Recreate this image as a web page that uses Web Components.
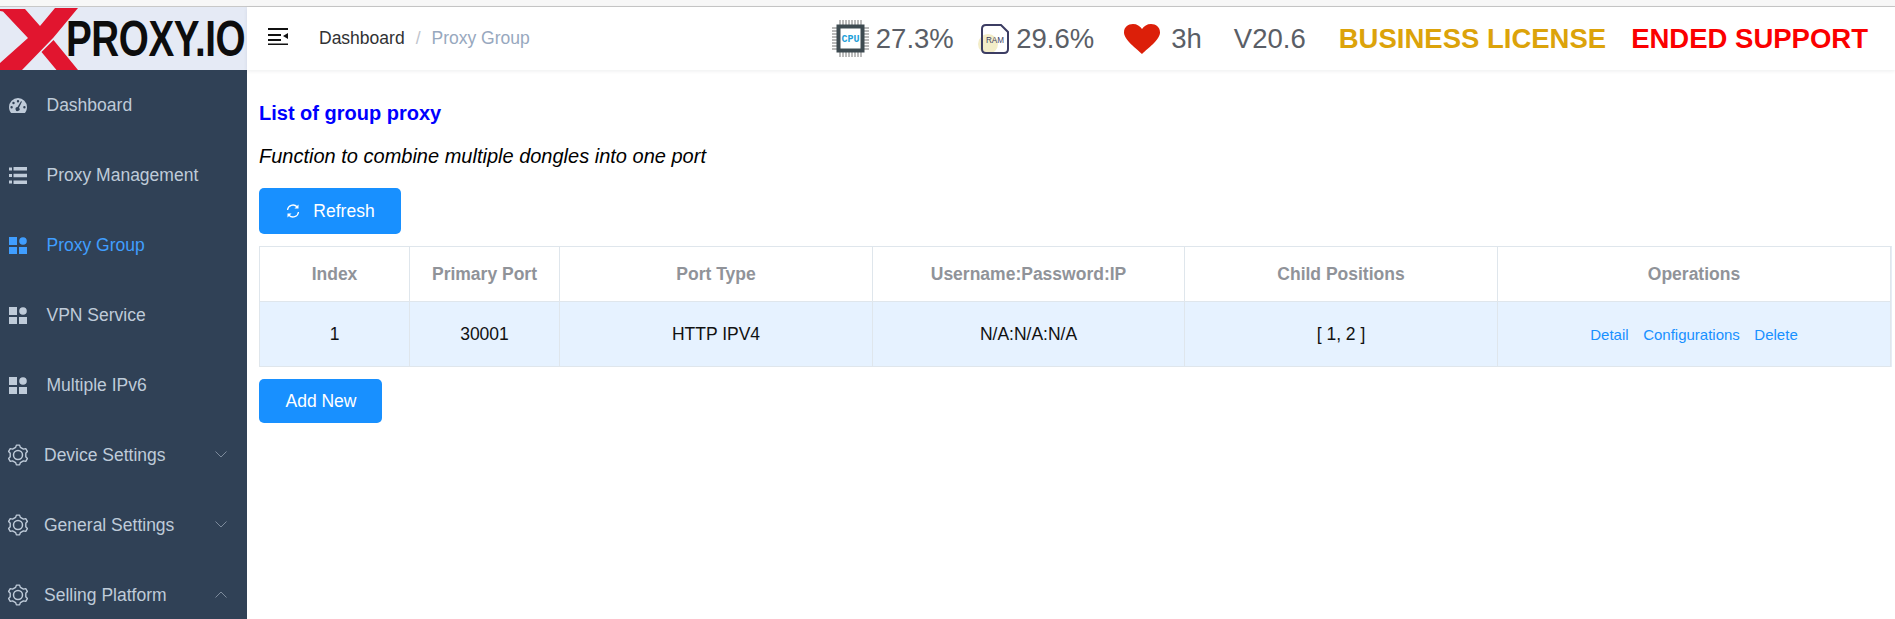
<!DOCTYPE html>
<html>
<head>
<meta charset="utf-8">
<title>Proxy Group</title>
<style>
  html, body { margin: 0; height: 100%; overflow: hidden; background: #fff; }
  body { font-family: "Liberation Sans", Arial, sans-serif; font-size: 17.5px; }
  svg { display: block; }
</style>
</head>
<body>
<template id="app-tpl">
  <style>
    :host { display: flex; flex-direction: column; height: 619px; overflow: hidden; }
    .strip { height: 6px; flex: none; background: #f7f7f7; border-bottom: 1px solid #c8c8c8; }
    .top { display: flex; flex: none; height: 63px; }
    .main { display: flex; flex: 1; min-height: 0; }
  </style>
  <div class="strip"></div>
  <div class="top"><slot name="logo"></slot><slot name="header"></slot></div>
  <div class="main"><slot name="side"></slot><slot></slot></div>
</template>

<template id="logo-tpl">
  <style>
    :host { display: block; position: relative; flex: none; width: 247px; height: 63px; background: #e5eaf5; overflow: hidden; }
    svg { position: absolute; left: 0; top: 0; }
    span { position: absolute; left: 66px; top: 2px; font: 700 50px/60px "Liberation Sans", sans-serif; color: #0d0d0d; transform: scaleX(.772); transform-origin: 0 50%; white-space: nowrap; letter-spacing: -.5px; }
  </style>
  <svg width="80" height="63" viewBox="0 0 80 63"><path fill="#e1152f" d="M0 2H25L40 19 55 1H78L53.500 30.500 22 63H0V56L28 31 3 4.500 0 4ZM41.500 45 53.500 33 78 63H56.500Z"/></svg>
  <span>PROXY.IO</span>
</template>

<template id="header-tpl">
  <style>
    :host { display: flex; flex: 1; align-items: center; height: 63px; box-shadow: 0 1px 4px rgba(0,21,41,.08); position: relative; }
    .ham { margin-left: 21px; width: 20px; flex: none; }
    .crumb { margin-left: 31px; display: flex; color: #303133; white-space: nowrap; }
    .crumb i { font-style: normal; color: #c0c4cc; margin: 0 11px; }
    .crumb b { font-weight: 400; color: #97a8be; }
    .stats { margin-left: auto; display: flex; align-items: center; margin-right: 27px; white-space: nowrap; }
  </style>
  <div class="ham"><svg width="20" height="18" viewBox="0 0 20 18"><path fill="#111" d="M0 1h20v2H0zM0 7h13v2H0zM0 12h13v2H0zM0 16.500h20V18H0zM20 6v6l-5-3z"/></svg></div>
  <div class="crumb"><span>Dashboard</span><i>/</i><b>Proxy Group</b></div>
  <div class="stats"><slot></slot></div>
</template>

<template id="stat-tpl">
  <style>
    :host { display: flex; align-items: center; font-size: 27.5px; color: #5a5e66; }
    :host([tone=gold]) { font-weight: 700; color: #dca30a; }
    :host([tone=red]) { font-weight: 700; color: #fb0000; }
    ::slotted(svg) { margin-right: 7px; overflow: visible; }
  </style>
  <slot name="icon"></slot><slot></slot>
</template>

<template id="side-tpl">
  <style>
    :host { display: block; flex: none; width: 247px; background: #304156; overflow: hidden; }
  </style>
  <slot></slot>
</template>

<template id="nav-tpl">
  <style>
    :host { display: flex; align-items: center; height: 70px; color: #bfcbd9; font-size: 17.5px; position: relative; }
    :host([active]) { color: #409eff; }
    .i { width: 46.500px; flex: none; display: flex; padding-left: 9px; box-sizing: border-box; }
    :host([gear]) .i { width: 44px; padding-left: 8px; }
    ::slotted([slot=chev]) { position: absolute; left: 214.500px; top: 31px; }
  </style>
  <span class="i"><slot name="icon"></slot></span><slot></slot>
  <slot name="chev"></slot>
</template>

<template id="gear-tpl">
  <style>
    :host { display: block; width: 20px; height: 20px; }
    svg { display: block; overflow: visible; }
  </style>
  <svg width="20" height="20" viewBox="0 0 20 20"><path fill="none" stroke="currentColor" stroke-width="1.400" stroke-linejoin="round"/><circle cx="10" cy="10" r="4.500" fill="none" stroke="currentColor" stroke-width="1.500"/></svg>
</template>

<template id="btn-tpl">
  <style>
    :host { display: inline-flex; align-items: center; justify-content: center; box-sizing: border-box; background: #1890ff; color: #fff; border-radius: 5px; font-size: 17.5px; height: var(--h, 46px); width: var(--w, 142px); gap: 13px; padding-left: 1px; }
  </style>
  <slot name="icon"></slot><slot></slot>
</template>

<template id="page-tpl">
  <style>
    :host { display: block; flex: 1; min-width: 0; padding: 0 4px 0 12px; }
    h2 { margin: 32px 0 0; font: 700 20px/23px "Liberation Sans", sans-serif; color: #0000ff; }
    p { margin: 20px 0 0; font: italic 20px/23px "Liberation Sans", sans-serif; color: #000; }
    .refresh { margin-top: 20px; display: flex; }
    .tbl { margin-top: 12px; }
    .add { margin-top: 12px; display: flex; }
  </style>
  <h2>List of group proxy</h2>
  <p>Function to combine multiple dongles into one port</p>
  <div class="refresh"><slot name="refresh"></slot></div>
  <div class="tbl"><slot name="table"></slot></div>
  <div class="add"><slot name="add"></slot></div>
</template>

<template id="table-tpl">
  <style>
    :host { display: block; }
    .t { display: grid; grid-template-columns: 150px 150px 313px 312px 313px 393px; border-top: 1px solid #dfe6ec; border-left: 1px solid #dfe6ec; border-right: 1px solid #e6ebf5; width: 1633px; box-sizing: border-box; }
    .c { display: flex; align-items: center; justify-content: center; box-sizing: border-box; border-right: 1px solid #dfe6ec; border-bottom: 1px solid #dfe6ec; }
    .h { height: 55px; color: #909399; font-weight: 700; background: #fff; }
    .b { height: 65px; background: #e6f2ff; color: #111; }
    .ops { color: #1890ff; font-size: 15px; gap: 14.500px; padding-top: 1px; }
  </style>
  <div class="t">
    <div class="c h">Index</div><div class="c h">Primary Port</div><div class="c h">Port Type</div><div class="c h">Username:Password:IP</div><div class="c h">Child Positions</div><div class="c h">Operations</div>
    <div class="c b">1</div><div class="c b">30001</div><div class="c b">HTTP IPV4</div><div class="c b">N/A:N/A:N/A</div><div class="c b">[ 1, 2 ]</div>
    <div class="c b ops"><span>Detail</span><span>Configurations</span><span>Delete</span></div>
  </div>
</template>

<x-app>
  <x-logo slot="logo"></x-logo>
  <x-header slot="header">
    <x-stat style="margin-right:27.500px">
      <svg slot="icon" width="37" height="37" viewBox="0 0 37 37"><path stroke="#777" stroke-width="1" d="M8 0v37M11 0v37M14 0v37M17 0v37M20 0v37M23 0v37M26 0v37M29 0v37M0 8h37M0 11h37M0 14h37M0 17h37M0 20h37M0 23h37M0 26h37M0 29h37"/><rect x="4.500" y="4.500" width="28" height="28" fill="#3d4a50"/><rect x="8.500" y="8.500" width="20" height="20" fill="#fff"/><text x="18.500" y="22" text-anchor="middle" font-family="Liberation Mono, monospace" font-weight="700" font-size="10" fill="#1f9fd8">CPU</text></svg>
      27.3%
    </x-stat>
    <x-stat style="margin-right:30px">
      <svg slot="icon" width="28" height="30" viewBox="0 0 28 30"><circle cx="7" cy="20" r="10" fill="#f3edc8"/><path fill="none" stroke="#3c3d63" stroke-width="2" d="M5 1H20L27 8V25Q27 29 23 29H5Q1 29 1 25V5Q1 1 5 1Z"/><text x="14" y="18.500" text-anchor="middle" font-family="Liberation Sans, sans-serif" font-size="9.500" textLength="18" lengthAdjust="spacingAndGlyphs" fill="#3c3d63">RAM</text></svg>
      29.6%
    </x-stat>
    <x-stat style="margin-right:32px">
      <svg slot="icon" width="36" height="30" viewBox="0 0 36 30" style="margin-right:11px"><path fill="#dc1f09" d="M18 30C13 25 0 16 0 8.500 0 3 4 0 9 0c4 0 7 2 9 5 2-3 5-5 9-5 5 0 9 3 9 8.500C36 16 23 25 18 30Z"/></svg>
      3h
    </x-stat>
    <x-stat style="margin-right:33px">V20.6</x-stat>
    <x-stat tone="gold" style="margin-right:25px">BUSINESS LICENSE</x-stat>
    <x-stat tone="red">ENDED SUPPORT</x-stat>
  </x-header>
  <x-side slot="side">
    <x-nav-item>
      <svg slot="icon" width="18" height="15" viewBox="0 0 18 15"><path fill="currentColor" fill-rule="evenodd" d="M9 0a9 9 0 0 1 9 9c0 2-.6 4-1.700 5.500-.3.400-.7.500-1.100.500H2.800c-.4 0-.8-.1-1.100-.500C.6 13 0 11 0 9a9 9 0 0 1 9-9ZM9 2a1.200 1.200 0 1 0 0 2.400A1.200 1.200 0 0 0 9 2ZM4.500 3.800a1.200 1.200 0 1 0 0 2.400 1.200 1.200 0 0 0 0-2.400ZM2.600 8a1.200 1.200 0 1 0 0 2.400 1.200 1.200 0 0 0 0-2.400ZM15.400 8a1.200 1.200 0 1 0 0 2.400 1.200 1.200 0 0 0 0-2.400ZM13 3.500 10 9.700a2 2 0 1 1-1.500-.6L12 3.200Z"/></svg>
      Dashboard
    </x-nav-item>
    <x-nav-item>
      <svg slot="icon" width="18" height="17" viewBox="0 0 18 17"><path fill="currentColor" d="M0 .5h3v3H0zM4.500 0H18v3.500H4.500zM0 7h3v3H0zM4.500 6.800H18v3.400H4.500zM0 13.500h3v3H0zM4.500 13.500H18V17H4.500z"/></svg>
      Proxy Management
    </x-nav-item>
    <x-nav-item active>
      <svg slot="icon" width="18" height="17" viewBox="0 0 18 17"><path fill="currentColor" d="M0 0h8v8H0zM0 10h8v7H0zM10 10h8v7h-8z"/><circle cx="14" cy="4" r="3.800" fill="currentColor"/></svg>
      Proxy Group
    </x-nav-item>
    <x-nav-item>
      <svg slot="icon" width="18" height="17" viewBox="0 0 18 17"><path fill="currentColor" d="M0 0h8v8H0zM0 10h8v7H0zM10 10h8v7h-8z"/><circle cx="14" cy="4" r="3.800" fill="currentColor"/></svg>
      VPN Service
    </x-nav-item>
    <x-nav-item>
      <svg slot="icon" width="18" height="17" viewBox="0 0 18 17"><path fill="currentColor" d="M0 0h8v8H0zM0 10h8v7H0zM10 10h8v7h-8z"/><circle cx="14" cy="4" r="3.800" fill="currentColor"/></svg>
      Multiple IPv6
    </x-nav-item>
    <x-nav-item gear>
      <x-gear slot="icon"></x-gear>
      Device Settings
      <svg slot="chev" width="12" height="7" viewBox="0 0 12 7"><path fill="none" stroke="#7d8b9c" stroke-width="1" d="M.5.5 6 6l5.500-5.500"/></svg>
    </x-nav-item>
    <x-nav-item gear>
      <x-gear slot="icon"></x-gear>
      General Settings
      <svg slot="chev" width="12" height="7" viewBox="0 0 12 7"><path fill="none" stroke="#7d8b9c" stroke-width="1" d="M.5.5 6 6l5.500-5.500"/></svg>
    </x-nav-item>
    <x-nav-item gear>
      <x-gear slot="icon"></x-gear>
      Selling Platform
      <svg slot="chev" width="12" height="7" viewBox="0 0 12 7"><path fill="none" stroke="#7d8b9c" stroke-width="1" d="M.5 6.500 6 1l5.500 5.500"/></svg>
    </x-nav-item>
  </x-side>
  <x-page>
    <x-btn slot="refresh">
      <svg slot="icon" width="14" height="14" viewBox="0 0 14 14"><path fill="none" stroke="#fff" stroke-width="1.300" d="M1.500 6A5.500 5.500 0 0 1 11 2.800M12.500 8A5.500 5.500 0 0 1 3 11.200"/><path fill="#fff" d="M12.500 .5v4h-4zM1.500 13.500v-4h4z"/></svg>
      Refresh
    </x-btn>
    <x-group-table slot="table"></x-group-table>
    <x-btn slot="add" style="--w:123px;--h:44px">Add New</x-btn>
  </x-page>
</x-app>

<script>
  // every element just clones its template into an open shadow root
  const tags = {
    'x-app': 'app-tpl',
    'x-logo': 'logo-tpl',
    'x-header': 'header-tpl',
    'x-stat': 'stat-tpl',
    'x-side': 'side-tpl',
    'x-nav-item': 'nav-tpl',
    'x-btn': 'btn-tpl',
    'x-page': 'page-tpl',
    'x-group-table': 'table-tpl'
  };
  Object.keys(tags).forEach(function (name) {
    const tpl = document.getElementById(tags[name]);
    customElements.define(name, class extends HTMLElement {
      constructor() {
        super();
        this.attachShadow({ mode: 'open' });
        this.shadowRoot.appendChild(tpl.content.cloneNode(true));
      }
    });
  });

  // six toothed gear outline for the settings items
  function gearPath() {
    let d = '';
    const teeth = 6;
    for (let t = 0; t < teeth; t++) {
      const mid = t / teeth * Math.PI * 2;
      // root, tooth corner, tooth corner, root
      [[-0.30, 8.0], [-0.16, 10], [0.16, 10], [0.30, 8.0]].forEach(function (p, i) {
        const a = mid + p[0];
        const x = (10 + p[1] * Math.sin(a)).toFixed(2);
        const y = (10 - p[1] * Math.cos(a)).toFixed(2);
        d += (t === 0 && i === 0 ? 'M' : 'L') + x + ' ' + y;
      });
    }
    return d + 'Z';
  }

  class XGear extends HTMLElement {
    constructor() {
      super();
      this.attachShadow({ mode: 'open' });
      this.shadowRoot.appendChild(document.getElementById('gear-tpl').content.cloneNode(true));
      this.shadowRoot.querySelector('path').setAttribute('d', gearPath());
    }
  }
  customElements.define('x-gear', XGear);
</script>
</body>
</html>
